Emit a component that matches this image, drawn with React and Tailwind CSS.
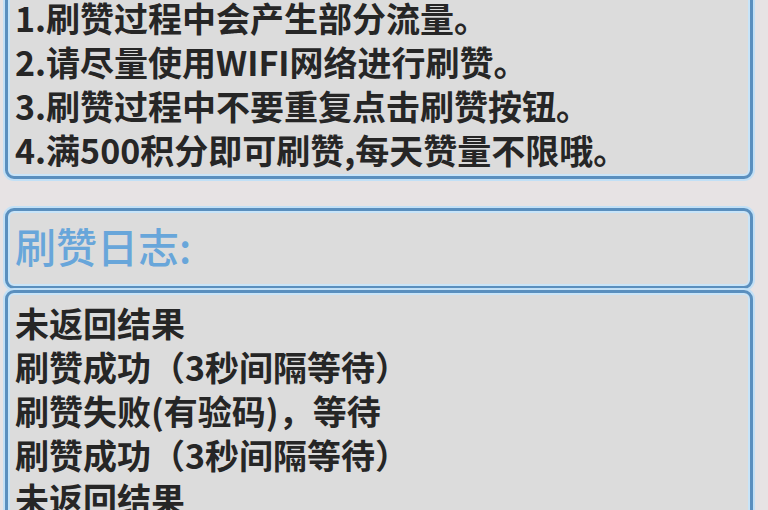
import React from "react";

const panel =
  "border-[3px] border-[#5a8fbe] rounded-[9px] bg-[#dcdcdc] shadow-[0_0_0_2px_#c2e0f6,inset_0_0_0_2px_#c8e4f8]";

const tips = [
  "1.刷赞过程中会产生部分流量。",
  "2.请尽量使用WIFI网络进行刷赞。",
  "3.刷赞过程中不要重复点击刷赞按钮。",
  "4.满500积分即可刷赞,每天赞量不限哦。",
];

const logs = [
  "未返回结果",
  "刷赞成功（3秒间隔等待）",
  "刷赞失败(有验码)，等待",
  "刷赞成功（3秒间隔等待）",
  "未返回结果",
];

export default function App() {
  return (
    <div
      className="w-[768px] h-[510px] overflow-hidden bg-[#e7e3e4] pl-[5px] pr-[15px] flex flex-col"
      style={{ fontFamily: '"Noto Sans CJK SC", "Noto Sans", sans-serif' }}
    >
      <div className={`${panel} -mt-[20px] pt-[13px] pb-[4px] pl-[7px] shrink-0`}>
        {tips.map((t, i) => (
          <div key={i} className="text-[34px] leading-[44px] font-bold text-[#262626] whitespace-nowrap">
            {t}
          </div>
        ))}
      </div>

      <div className={`${panel} mt-[29px] h-[81px] pl-[7px] flex items-center shrink-0`}>
        <div className="text-[41px] leading-[44px] font-medium text-[#68a6da] whitespace-nowrap -mt-[8px]">
          刷赞日志:
        </div>
      </div>

      <div className={`${panel} mt-[1px] pt-[8px] pl-[7px] flex-1 rounded-b-none`}>
        {logs.map((t, i) => (
          <div key={i} className="text-[34px] leading-[44px] font-bold text-[#262626] whitespace-nowrap">
            {t}
          </div>
        ))}
      </div>
    </div>
  );
}
